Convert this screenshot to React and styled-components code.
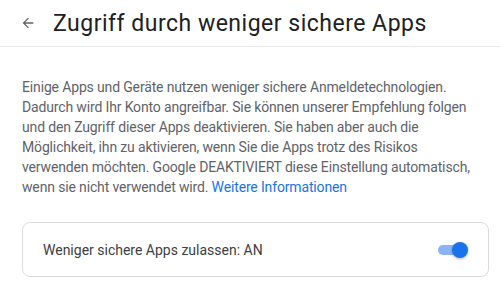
import React from "react";
import styled, { createGlobalStyle } from "styled-components";

const GlobalStyle = createGlobalStyle`
    body {
        margin: 0;
        background: #fff;
        font-family: Roboto, "Liberation Sans", Arial, sans-serif;
    }
`;

const Page = styled.div`
    width: 500px;
    height: 288px;
    overflow: hidden;
`;

const Header = styled.div`
    display: flex;
    align-items: center;
    height: 47px;
    padding-left: 19px;
    border-bottom: 1px solid #e8eaed;
    box-sizing: border-box;
`;

const BackButton = styled.button`
    display: flex;
    align-items: center;
    justify-content: center;
    width: 18px;
    height: 18px;
    padding: 0;
    margin-right: 16px;
    border: none;
    background: none;
    color: #5f6368;
`;

const Title = styled.h1`
    margin: 0;
    font-size: 23px;
    font-weight: 400;
    color: #202124;
    letter-spacing: 0.5px;
`;

const Content = styled.div`
    padding: 30px 11px 0 22px;
`;

const Description = styled.p`
    margin: 0;
    width: 462px;
    font-size: 14px;
    line-height: 20px;
    letter-spacing: -0.15px;
    color: #5f6368;
`;

const Link = styled.a`
    color: #1a73e8;
    text-decoration: none;
`;

const Card = styled.div`
    display: flex;
    align-items: center;
    justify-content: space-between;
    height: 55px;
    margin-top: 25px;
    padding: 0 24px 0 20px;
    border: 1px solid #dadce0;
    border-radius: 8px;
    box-sizing: border-box;
`;

const CardLabel = styled.span`
    font-size: 14px;
    color: #3c4043;
`;

const Switch = styled.div`
    position: relative;
    width: 26px;
    height: 10px;
    border-radius: 5px;
    background: ${(p) => (p.$on ? "#8ab4f8" : "#bdc1c6")};
`;

const Thumb = styled.div`
    position: absolute;
    top: -3px;
    left: ${(p) => (p.$on ? "14px" : "-2px")};
    width: 16px;
    height: 16px;
    border-radius: 50%;
    background: ${(p) => (p.$on ? "#1a73e8" : "#fff")};
    box-shadow: 0 1px 3px rgba(0, 0, 0, 0.3);
`;

function ArrowBack() {
    return (
        <svg width="16" height="16" viewBox="0 0 24 24" fill="currentColor">
            <path d="M20 11H7.83l5.59-5.59L12 4l-8 8 8 8 1.41-1.41L7.83 13H20v-2z" />
        </svg>
    );
}

export default function App() {
    return (
        <Page>
            <GlobalStyle />
            <Header>
                <BackButton>
                    <ArrowBack />
                </BackButton>
                <Title>Zugriff durch weniger sichere Apps</Title>
            </Header>
            <Content>
                <Description>
                    Einige Apps und Geräte nutzen weniger sichere Anmeldetechnologien.
                    Dadurch wird Ihr Konto angreifbar. Sie können unserer Empfehlung folgen
                    und den Zugriff dieser Apps deaktivieren. Sie haben aber auch die
                    Möglichkeit, ihn zu aktivieren, wenn Sie die Apps trotz des Risikos
                    verwenden möchten. Google DEAKTIVIERT diese Einstellung automatisch,
                    wenn sie nicht verwendet wird. <Link href="#">Weitere Informationen</Link>
                </Description>
                <Card>
                    <CardLabel>Weniger sichere Apps zulassen: AN</CardLabel>
                    <Switch $on>
                        <Thumb $on />
                    </Switch>
                </Card>
            </Content>
        </Page>
    );
}
